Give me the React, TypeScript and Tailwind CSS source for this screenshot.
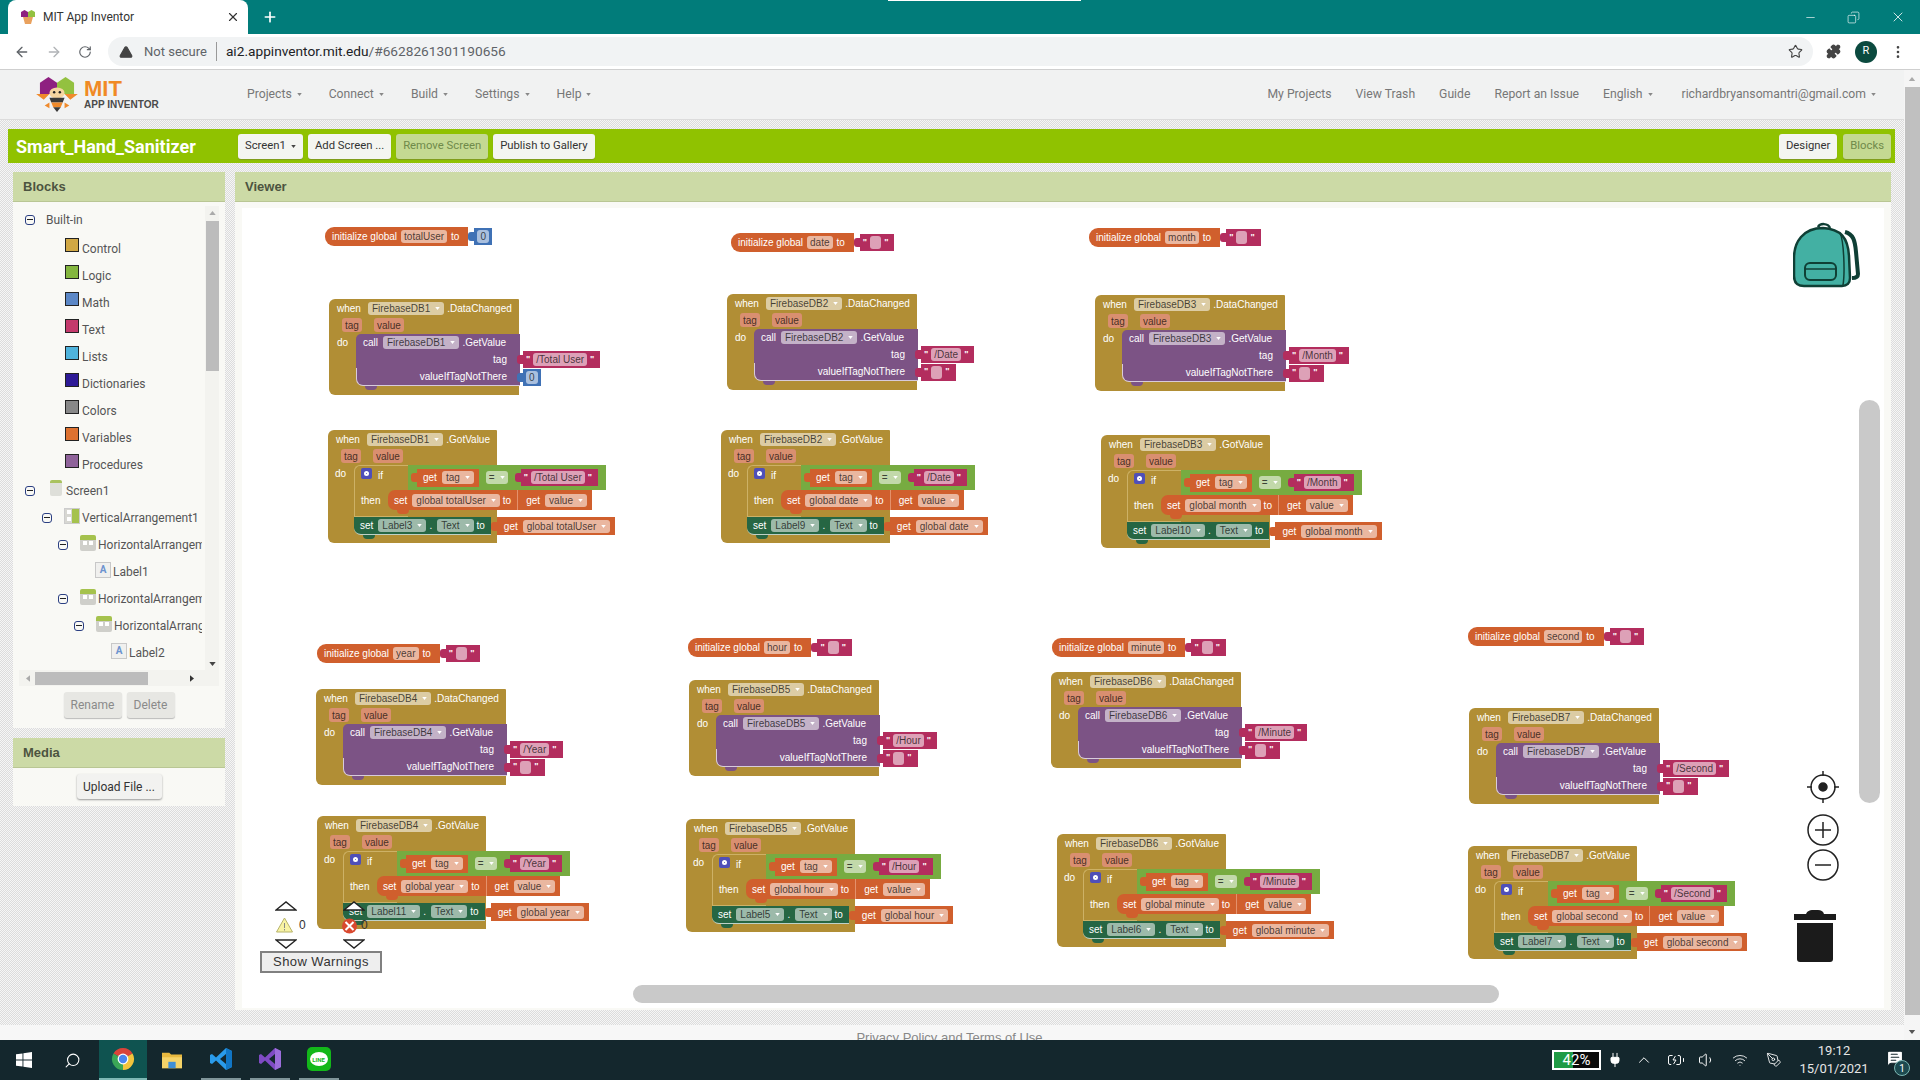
import React from "react"
import { ArrowLeft, ArrowRight, RotateCw, Star, Puzzle, EllipsisVertical, TriangleAlert, X, Plus, Minus, Copy, Search, ChevronUp, Plug, Volume1, Wifi, MessageSquareText, BatteryCharging, PenTool } from "lucide-react"

const dither = "bg-[repeating-conic-gradient(#dcdcdc_0_25%,#f6f6f6_0_50%)] bg-[length:2px_2px]"
const panelHead = "flex h-[30px] items-center border-b border-[#b9c694] bg-[#ccdaa6] pl-[10px] text-[13px] font-bold text-[#4c5440]"

function Caret({ className = "" }: { className?: string }) {
  return <svg viewBox="0 0 6 4" className={`ml-[5px] h-[3px] w-[5px] shrink-0 fill-current ${className}`}><path d="M0 0h6L3 4z" /></svg>
}

function Field({ children, drop }: { children?: React.ReactNode; drop?: boolean }) {
  return (
    <span className={`flex h-[13px] items-center rounded-[3px] bg-white/55 text-black/70 ${drop ? "ml-[5px] mr-[3px] px-[4px]" : "mx-[4px] px-[3px]"}`}>
      {children}
      {drop && <Caret className="text-white" />}
    </span>
  )
}

function Tab({ color }: { color: string }) {
  return <span className={`h-[9px] w-[6px] shrink-0 rounded-l-[3px] ${color}`} />
}

function TextValue({ text }: { text?: string }) {
  return (
    <div className="flex items-center">
      <Tab color="bg-[#b32d5e]" />
      <div className="flex h-[17px] items-center bg-[#b32d5e] pl-[3px] pr-[6px] text-white">
        <span className="text-[9px] font-bold">"</span>
        <span className="mx-[3px] flex h-[13px] min-w-[11px] items-center rounded-[3px] bg-white/55 px-[3px] text-black/70">{text}</span>
        <span className="text-[9px] font-bold">"</span>
      </div>
    </div>
  )
}

function ZeroValue() {
  return (
    <div className="flex items-center">
      <Tab color="bg-[#3f71b5]" />
      <div className="flex h-[17px] items-center bg-[#3f71b5] px-[2px]">
        <span className="mx-[1px] flex h-[13px] items-center rounded-[3px] bg-white/55 px-[3px] text-black/70">0</span>
      </div>
    </div>
  )
}

function InitBlock({ pos, name, zero }: { pos: string; name: string; zero?: boolean }) {
  return (
    <div className={`absolute flex items-center whitespace-nowrap ${pos}`}>
      <div className="flex h-[19px] items-center rounded-l-[9px] bg-[#d05f2d] pl-[7px] pr-[9px] text-white">
        initialize global<Field>{name}</Field>to
      </div>
      {zero ? <ZeroValue /> : <TextValue />}
    </div>
  )
}

function Bump({ color }: { color: string }) {
  return <span className={`absolute bottom-[-4px] left-[9px] h-[4px] w-[12px] rounded-b-[6px] ${color}`} />
}

function WhenRows({ db, method }: { db: string; method: string }) {
  return (
    <>
      <div className="flex h-[17px] items-center pl-[8px] pt-[1px] text-white">
        when<span className="w-[2px]" /><Field drop>{db}</Field>{method}
      </div>
      <div className="flex h-[18px] items-center pl-[13px]">
        <span className="flex h-[14px] items-center rounded-[3px] bg-[#d98f70] px-[3px] text-black/70">tag</span>
        <span className="ml-[12px] flex h-[14px] items-center rounded-[3px] bg-[#d98f70] px-[3px] text-black/70">value</span>
      </div>
    </>
  )
}

function DataChanged({ pos, db, path, zero }: { pos: string; db: string; path: string; zero?: boolean }) {
  return (
    <div className={`absolute w-[190px] whitespace-nowrap rounded-l-[6px] rounded-tr-[1px] bg-[#b18e35] ${pos}`}>
      <WhenRows db={db} method=".DataChanged" />
      <div className="flex">
        <span className="w-[27px] shrink-0 pl-[8px] pt-[1px] text-white">do</span>
        <div className="relative">
          <div className="flex h-[17px] w-[164px] items-center rounded-tl-[5px] bg-[#7c5385] pl-[7px] text-white">
            call<Field drop>{db}</Field>.GetValue
          </div>
          <div className="flex h-[17px] items-center">
            <div className="flex h-full w-[164px] items-center justify-end bg-[#7c5385] pr-[13px] text-white">tag</div>
            <div className="-ml-[3px]"><TextValue text={path} /></div>
          </div>
          <div className="flex h-[18px] items-center">
            <div className="flex h-full w-[164px] items-center justify-end rounded-bl-[7px] border-b border-l border-white/70 bg-[#7c5385] pr-[13px] text-white">valueIfTagNotThere</div>
            <div className="-ml-[3px]">{zero ? <ZeroValue /> : <TextValue />}</div>
          </div>
          <Bump color="bg-[#7c5385]" />
        </div>
      </div>
      <div className="h-[9px]" />
    </div>
  )
}

function GetBlock({ name, narrow }: { name: string; narrow?: boolean }) {
  return (
    <div className={`flex h-[18px] items-center bg-[#d05f2d] pr-[2px] text-white ${narrow ? "pl-[6px]" : "pl-[7px]"}`}>
      get<Field drop>{name}</Field>
    </div>
  )
}

function GotValue({ pos, db, label, global, path }: { pos: string; db: string; label: string; global: string; path: string }) {
  return (
    <div className={`absolute w-[169px] whitespace-nowrap rounded-l-[6px] rounded-tr-[1px] bg-[#b18e35] ${pos}`}>
      <WhenRows db={db} method=".GotValue" />
      <div className="flex">
        <span className="w-[26px] shrink-0 pl-[7px] pt-[1px] text-white">do</span>
        <div>
          {/* if / then */}
          <div className="flex h-[25px]">
            <div className="flex w-[54px] shrink-0 items-start rounded-tl-[6px] border-l border-t border-[#cdb166] pl-[6px] pt-[2px] text-white">
              <span className="mr-[6px] flex h-[11px] w-[11px] items-center justify-center rounded-[2px] bg-[#4f4fb8]">
                <span className="h-[5px] w-[5px] rounded-full border-2 border-white" />
              </span>
              if
            </div>
            <div className="flex h-[25px] items-center bg-[#77ab41] pl-[3px] pr-[8px]">
              <Tab color="bg-[#d05f2d]" />
              <GetBlock name="tag" narrow />
              <span className="mx-[7px] flex h-[13px] items-center rounded-[3px] bg-white/55 px-[3px] text-black/70">=<Caret className="text-white" /></span>
              <TextValue text={path} />
            </div>
          </div>
          <div className="flex h-[20px]">
            <div className="flex w-[34px] shrink-0 items-center border-l border-[#cdb166] pl-[6px] text-white">then</div>
            <div className="relative flex h-[20px] items-center rounded-l-[7px] bg-[#d05f2d] pl-[6px] text-white">
              set<Field drop>{global}</Field>to
              <span className="ml-[6px] mr-[1px] h-[20px] w-px bg-[#e4916c]" />
              <GetBlock name="value" />
              <Bump color="bg-[#d05f2d]" />
            </div>
          </div>
          <div className="h-[7px] w-[54px] border-b border-l border-[#cdb166]" />
          <div className="relative flex h-[18px] items-center">
            <div className="flex h-full items-center rounded-bl-[7px] border-b border-white/70 bg-[#266643] pl-[6px] pr-[6px] text-white">
              set<Field drop>{label}</Field>.<Field drop>Text</Field>to
            </div>
            <Tab color="bg-[#d05f2d]" />
            <GetBlock name={global} />
            <Bump color="bg-[#266643]" />
          </div>
        </div>
      </div>
      <div className="h-[8px]" />
    </div>
  )
}

const categories = [
  { name: "Control", color: "bg-[#d1a845]" },
  { name: "Logic", color: "bg-[#84b63f]" },
  { name: "Math", color: "bg-[#5b87c6]" },
  { name: "Text", color: "bg-[#c43a6c]" },
  { name: "Lists", color: "bg-[#4fb3dc]" },
  { name: "Dictionaries", color: "bg-[#2d1a96]" },
  { name: "Colors", color: "bg-[#888888]" },
  { name: "Variables", color: "bg-[#de7230]" },
  { name: "Procedures", color: "bg-[#8f639a]" },
]

function MinusBox({ className = "" }: { className?: string }) {
  return (
    <span className={`flex h-[10px] w-[10px] shrink-0 items-center justify-center rounded-[3px] border border-[#2b3f82] ${className}`}>
      <span className="h-px w-[6px] bg-[#222]" />
    </span>
  )
}

function ScreenIcon() {
  return <span className="-mt-[6px] block h-[16px] w-[12px] shrink-0 rounded-[2px] border-t-[3px] border-[#a9c25f] bg-[#dedfd9]" />
}

function VertIcon() {
  return (
    <span className="-mt-[4px] flex h-[16px] w-[16px] shrink-0 border border-[#ccc]">
      <span className="flex w-1/2 flex-col items-center justify-around bg-[#d7d7d2]">
        <span className="h-[4px] w-[4px] bg-white" />
        <span className="h-[4px] w-[4px] bg-white" />
      </span>
      <span className="w-1/2 bg-[#a5c24d]" />
    </span>
  )
}

function HorizIcon() {
  return (
    <span className="-mt-[4px] flex h-[16px] w-[16px] shrink-0 flex-col overflow-hidden rounded-[2px]">
      <span className="h-[5px] bg-[#a5c24d]" />
      <span className="flex h-[11px] justify-center gap-[2px] bg-[#cfcfca] pt-px">
        <span className="h-[4px] w-[4px] bg-white" />
        <span className="h-[4px] w-[4px] bg-white" />
      </span>
    </span>
  )
}

function LabelIcon() {
  return (
    <span className="-mt-[4px] flex h-[16px] w-[16px] shrink-0 items-center justify-center border border-[#c8c8c8] bg-[#f0f0ee] text-[10px] font-bold leading-none text-[#6c93cf]">A</span>
  )
}

function TreeRow({ pad, minus, icon, label }: { pad: string; minus?: boolean; icon?: React.ReactNode; label: string }) {
  return (
    <div className={`flex h-[27px] items-center whitespace-nowrap ${pad}`}>
      {minus && <MinusBox className="mr-[12px]" />}
      {icon && <span className="mr-[2px] flex w-[16px] justify-center">{icon}</span>}
      <span>{label}</span>
    </div>
  )
}

function BlocksPanel() {
  return (
    <div className="w-[212px] shrink-0">
      <div className="bg-[#f9f9f5] pb-[10px]">
        <div className={panelHead}>Blocks</div>
        <div className="relative mx-[6px] mt-[4px] h-[480px] overflow-hidden font-['Roboto',sans-serif] text-[12px] text-[#555]">
          <div className="w-[183px] overflow-hidden">
            <div className="flex h-[28px] items-center pb-[1px] pl-[6px]">
              <MinusBox className="mr-[11px]" />Built-in
            </div>
            {categories.map(c => (
              <div key={c.name} className="flex h-[27px] items-center pl-[46px]">
                <span className={`-mt-[6px] mr-[3px] h-[14px] w-[14px] border border-[#222] ${c.color}`} />
                <span className="mt-[2px]">{c.name}</span>
              </div>
            ))}
            <div className="flex h-[27px] items-center pl-[6px]">
              <MinusBox className="mr-[15px]" /><span className="mr-[4px] flex"><ScreenIcon /></span>Screen1
            </div>
            <TreeRow pad="pl-[23px]" minus icon={<VertIcon />} label="VerticalArrangement1" />
            <TreeRow pad="pl-[39px]" minus icon={<HorizIcon />} label="HorizontalArrangement1" />
            <TreeRow pad="pl-[76px]" icon={<LabelIcon />} label="Label1" />
            <TreeRow pad="pl-[39px]" minus icon={<HorizIcon />} label="HorizontalArrangement2" />
            <TreeRow pad="pl-[55px]" minus icon={<HorizIcon />} label="HorizontalArrangement3" />
            <TreeRow pad="pl-[92px]" icon={<LabelIcon />} label="Label2" />
          </div>
          {/* tree scrollbars */}
          <div className="absolute right-0 top-0 flex h-[464px] w-[14px] flex-col items-center bg-[#f3f3ef]">
            <svg viewBox="0 0 8 5" className="mt-[5px] h-[4px] w-[7px] fill-[#aaa]"><path d="M4 0l4 5H0z" /></svg>
            <div className="mt-[6px] h-[150px] w-[13px] bg-[#bcbcbc]" />
            <svg viewBox="0 0 8 5" className="mt-auto mb-[4px] h-[4px] w-[7px] fill-[#444]"><path d="M0 0h8L4 5z" /></svg>
          </div>
          <div className="absolute bottom-0 left-0 right-0 flex h-[16px] items-center bg-[#f3f3ef]">
            <svg viewBox="0 0 5 8" className="ml-[7px] h-[7px] w-[4px] fill-[#aaa]"><path d="M5 0v8L0 4z" /></svg>
            <div className="ml-[5px] h-[13px] w-[113px] bg-[#bcbcbc]" />
            <svg viewBox="0 0 5 8" className="ml-[42px] h-[7px] w-[4px] fill-[#333]"><path d="M0 0l5 4-5 4z" /></svg>
          </div>
        </div>
        <div className="mt-[6px] flex justify-center gap-[5px] font-['Roboto',sans-serif] text-[12px] text-[#8a8a8a]">
          <span className="flex h-[26px] w-[58px] items-center justify-center rounded-[3px] bg-[#e7e7e3] shadow-[0_1px_1px_#bbb]">Rename</span>
          <span className="flex h-[26px] w-[48px] items-center justify-center rounded-[3px] bg-[#e7e7e3] shadow-[0_1px_1px_#bbb]">Delete</span>
        </div>
      </div>
      <div className="mt-[10px] bg-[#f9f9f5] pb-[7px]">
        <div className={panelHead}>Media</div>
        <div className="mt-[6px] flex justify-center">
          <span className="flex h-[25px] w-[85px] items-center justify-center rounded-[3px] bg-[#f2f2f0] font-['Roboto',sans-serif] text-[12px] text-[#333] shadow-[0_1px_2px_#999]">Upload File ...</span>
        </div>
      </div>
    </div>
  )
}

function Backpack() {
  return (
    <svg viewBox="0 0 67 66" className="absolute left-[1551px] top-[14px] h-[66px] w-[67px]">
      <path d="M52 10c8 2 10 8 11 20l2 22c0 3-3 4-6 4" fill="#fff" stroke="#0f3f35" strokeWidth="4" />
      <path d="M25 5c2-4 10-4 12 1" fill="none" stroke="#0f3f35" strokeWidth="2.5" />
      <path d="M30 6C10 6 1 20 1 36v18c0 6 3 10 10 10h38c5 0 8-3 8-8l-1-22C55 16 48 7 30 6z" fill="#43b0a3" stroke="#0f3f35" strokeWidth="2.5" />
      <path d="M47 11c4 8 5 40 3 52" fill="none" stroke="#0f3f35" strokeWidth="1.5" />
      <rect x="12" y="41" width="31" height="17" rx="5" fill="#43b0a3" stroke="#0f3f35" strokeWidth="2" />
      <path d="M12 47h31" stroke="#0f3f35" strokeWidth="1.5" />
    </svg>
  )
}

function WorkspaceControls() {
  return (
    <>
      <svg viewBox="0 0 32 32" className="absolute left-[1565px] top-[563px] h-[32px] w-[32px]" fill="none" stroke="#222" strokeWidth="1.5">
        <circle cx="16" cy="16" r="12" />
        <circle cx="16" cy="16" r="4" fill="#222" />
        <path d="M16 0v5M16 27v5M0 16h5M27 16h5" />
      </svg>
      <svg viewBox="0 0 32 32" className="absolute left-[1565px] top-[606px] h-[32px] w-[32px]" fill="none" stroke="#222" strokeWidth="1.5">
        <circle cx="16" cy="16" r="15" />
        <path d="M16 8v16M8 16h16" />
      </svg>
      <svg viewBox="0 0 32 32" className="absolute left-[1565px] top-[641px] h-[32px] w-[32px]" fill="none" stroke="#222" strokeWidth="1.5">
        <circle cx="16" cy="16" r="15" />
        <path d="M8 16h16" />
      </svg>
      <svg viewBox="0 0 42 54" className="absolute left-[1552px] top-[700px] h-[54px] w-[42px]" fill="#1b1b1b">
        <path d="M12 6c1-3 4-4 6-4h6c3 0 5 1 6 4h12v6H0V6z" />
        <path d="M3 15h36v36c0 2-1 3-3 3H6c-2 0-3-1-3-3z" />
      </svg>
    </>
  )
}

function Chevron({ pos, down }: { pos: string; down?: boolean }) {
  return (
    <svg viewBox="0 0 22 10" className={`absolute h-[10px] w-[22px] ${pos}`} fill="#fff" stroke="#222" strokeWidth="1.4">
      <path d={down ? "M1 1h20L11 9z" : "M1 9h20L11 1z"} />
    </svg>
  )
}

function WarningIndicator() {
  return (
    <>
      <Chevron pos="left-[33px] top-[693px]" />
      <svg viewBox="0 0 17 16" className="absolute left-[34px] top-[709px] h-[16px] w-[17px]">
        <path d="M8.5 1L16.5 15H.5z" fill="#f8f3a4" stroke="#b6b36a" />
        <path d="M8.5 6v5M8.5 12v1.5" stroke="#888" />
      </svg>
      <span className="absolute left-[57px] top-[711px] font-['Liberation_Sans',sans-serif] text-[12px] leading-none text-[#333]">0</span>
      <Chevron pos="left-[33px] top-[731px]" down />
      <Chevron pos="left-[101px] top-[693px]" />
      <svg viewBox="0 0 17 16" className="absolute left-[99px] top-[710px] h-[16px] w-[17px]">
        <circle cx="8.5" cy="8" r="7.5" fill="#d9492f" />
        <path d="M4.5 4l8 8M12.5 4l-8 8" stroke="#fff" strokeWidth="2" />
      </svg>
      <span className="absolute left-[119px] top-[711px] font-['Liberation_Sans',sans-serif] text-[12px] leading-none text-[#333]">0</span>
      <Chevron pos="left-[101px] top-[731px]" down />
      <div className="absolute left-[18px] top-[743px] flex h-[22px] w-[122px] items-center justify-center border-2 border-[#808080] bg-[#eeeeee] font-['Liberation_Sans',sans-serif] text-[13px] tracking-[0.4px] text-[#333]">Show Warnings</div>
    </>
  )
}

function ChromeLogo() {
  return (
    <svg viewBox="0 0 24 24" className="h-[24px] w-[24px]">
      <path d="M12 12L2.47 6.5A11 11 0 0 1 21.53 6.5Z" fill="#d9443a" />
      <path d="M12 12L21.53 6.5A11 11 0 0 1 12 23Z" fill="#f2c43c" />
      <path d="M12 12L12 23A11 11 0 0 1 2.47 6.5Z" fill="#3aa757" />
      <circle cx="12" cy="12" r="5.4" fill="#fff" />
      <circle cx="12" cy="12" r="4.2" fill="#4b86ee" />
    </svg>
  )
}

function AppLogo() {
  return (
    <svg viewBox="0 0 44 38" className="h-[36px] w-[42px] shrink-0">
      <path d="M4 6l9-6 9 6v12H4z" fill="#8e2080" />
      <path d="M22 6l9-6 9 6v12H22z" fill="#93c140" />
      <path d="M0 18h14l-6 6zM44 18H30l6 6z" fill="#ef8a2c" />
      <path d="M9 30l5-3v6zM35 30l-5-3v6z" fill="#ef8a2c" />
      <ellipse cx="22" cy="17" rx="8" ry="6" fill="#f6d5a0" />
      <circle cx="19" cy="16" r="1.3" fill="#222" />
      <circle cx="25" cy="16" r="1.3" fill="#222" />
      <path d="M14 22h16l-2 5H16z" fill="#3a3a3a" />
      <path d="M16 27h12l-2 5H18z" fill="#ef8a2c" />
      <path d="M18 32h8l-4 5z" fill="#3a3a3a" />
    </svg>
  )
}

function HeaderMenu({ label }: { label: string }) {
  return (
    <span className="flex items-center whitespace-nowrap">
      {label}<Caret className="text-[#888]" />
    </span>
  )
}

function BarButton({ label, off, drop }: { label: string; off?: boolean; drop?: boolean }) {
  return (
    <span className={`flex h-[25px] items-center whitespace-nowrap rounded-[3px] px-[7px] font-['Roboto',sans-serif] text-[11.3px] shadow-[0_1px_1px_#7f9a20] ${off ? "bg-[#c4d992] text-[#6f8a4a]" : "bg-[#f4f5f1] text-[#333]"}`}>
      {label}{drop && <Caret className="text-[#444]" />}
    </span>
  )
}

function TaskCell({ underline, children }: { underline?: boolean; children: React.ReactNode }) {
  return (
    <div className="flex h-[40px] w-[49px] justify-center">
      <div className={`flex h-[40px] w-[40px] items-center justify-center ${underline ? "border-b-2 border-[#7f9599]" : ""}`}>{children}</div>
    </div>
  )
}

export default function App() {
  return (
    <div className="relative flex h-[1080px] w-[1920px] flex-col overflow-hidden bg-white font-['Liberation_Sans',sans-serif] text-[10px]">
      {/* browser tab strip */}
      <div className="relative flex h-[34px] shrink-0 bg-[#017c7a] font-['Roboto',sans-serif] text-white">
        <div className="ml-[8px] flex h-[34px] w-[240px] items-center rounded-t-[8px] bg-white pl-[12px] pr-[8px] text-[12px] text-[#333]">
          <svg viewBox="0 0 16 16" className="mr-[7px] h-[16px] w-[16px] shrink-0">
            <path d="M1 3l3.5-2L8 3v5H1z" fill="#8e2080" />
            <path d="M8 3l3.5-2L15 3v5H8z" fill="#93c140" />
            <path d="M3 8h10l-2 7H5z" fill="#e9a15e" />
          </svg>
          <span>MIT App Inventor</span>
          <X className="ml-auto h-[14px] w-[14px] text-[#333]" strokeWidth={2} />
        </div>
        <Plus className="ml-[14px] mt-[9px] h-[16px] w-[16px]" strokeWidth={2.5} />
        <div className="absolute left-[888px] top-0 h-px w-[193px] bg-white" />
        <div className="ml-auto flex items-center gap-[30px] pr-[14px]">
          <Minus className="h-[13px] w-[13px]" strokeWidth={1.2} />
          <Copy className="h-[13px] w-[13px] -scale-x-100" strokeWidth={1.2} />
          <X className="h-[16px] w-[16px]" strokeWidth={1.2} />
        </div>
      </div>

      {/* address bar */}
      <div className="flex h-[36px] shrink-0 items-center border-b border-[#cfcfcf] pl-[14px] font-['Roboto',sans-serif] text-[13px] text-[#5f6368]">
        <ArrowLeft className="h-[16px] w-[16px]" strokeWidth={2} />
        <ArrowRight className="ml-[16px] h-[16px] w-[16px] text-[#b0b3b6]" strokeWidth={2} />
        <RotateCw className="ml-[16px] h-[14px] w-[14px]" strokeWidth={2} />
        <div className="ml-[16px] flex h-[29px] w-[1705px] items-center rounded-full bg-[#f1f3f4] pl-[11px] pr-[10px]">
          <TriangleAlert className="h-[14px] w-[14px] fill-[#444] text-[#444]" />
          <span className="ml-[11px]">Not secure</span>
          <span className="mx-[9px] h-[19px] w-px bg-[#999]" />
          <span className="text-[13.7px] text-[#202124]">ai2.appinventor.mit.edu<span className="text-[#5f6368]">/#6628261301190656</span></span>
          <Star className="ml-auto h-[15px] w-[15px] text-[#444]" strokeWidth={1.8} />
        </div>
        <Puzzle className="ml-[13px] h-[15px] w-[15px] fill-[#444] text-[#444]" />
        <span className="ml-[14px] flex h-[22px] w-[22px] items-center justify-center rounded-full bg-[#0b4a3f] text-[11px] text-white">R</span>
        <EllipsisVertical className="ml-[13px] h-[16px] w-[16px] text-[#444]" />
      </div>

      {/* page */}
      <div className="relative flex min-h-0 flex-1">
        <div className="flex w-[1904px] shrink-0 flex-col overflow-hidden">
          <div className={`flex flex-1 flex-col overflow-hidden ${dither}`}>
            <div className="flex h-[50px] shrink-0 items-center border-b border-[#dcdcdc] bg-[#f1f2f2] pl-[36px] pr-[28px] font-['Roboto',sans-serif] text-[12.2px] text-[#777]">
              <AppLogo />
              <div className="-ml-[2px] mr-[90px] flex w-[76px] flex-col font-['Liberation_Sans',sans-serif]">
                <span className="pl-[8px] text-[22px] font-bold leading-[20px] text-[#f08a25]">MIT</span>
                <span className="pl-[8px] text-[10px] font-bold leading-[11px] whitespace-nowrap text-[#4a4a4a]">APP INVENTOR</span>
              </div>
              <div className="ml-[5px] flex gap-[27px]">
                <HeaderMenu label="Projects" />
                <HeaderMenu label="Connect" />
                <HeaderMenu label="Build" />
                <HeaderMenu label="Settings" />
                <HeaderMenu label="Help" />
              </div>
              <div className="ml-auto flex gap-[24px]">
                <span>My Projects</span>
                <span>View Trash</span>
                <span>Guide</span>
                <span>Report an Issue</span>
                <span className="mr-[5px]"><HeaderMenu label="English" /></span>
                <HeaderMenu label="richardbryansomantri@gmail.com" />
              </div>
            </div>

            <div className="ml-[8px] mt-[9px] flex h-[34px] w-[1887px] shrink-0 items-center bg-[#90c200] pl-[8px] pr-[4px]">
              <span className="w-[222px] font-['Roboto',sans-serif] text-[18px] font-bold text-white">Smart_Hand_Sanitizer</span>
              <div className="flex gap-[5px]">
                <BarButton label="Screen1" drop />
                <BarButton label="Add Screen ..." />
                <BarButton label="Remove Screen" off />
                <BarButton label="Publish to Gallery" />
              </div>
              <div className="ml-auto flex gap-[6px]">
                <BarButton label="Designer" />
                <BarButton label="Blocks" off />
              </div>
            </div>

            <div className="ml-[13px] mt-[9px] flex shrink-0 gap-[10px]">
              <BlocksPanel />
              <div className="w-[1656px] shrink-0 bg-[#f9f9f5] pb-[2px]">
                <div className={panelHead}>Viewer</div>
                <div className="relative mx-[7px] mt-[6px] h-[800px] overflow-hidden bg-white">
                  <InitBlock pos="left-[83px] top-[19px]" name="totalUser" zero />
                  <DataChanged pos="left-[87px] top-[91px]" db="FirebaseDB1" path="/Total User" zero />
                  <GotValue pos="left-[86px] top-[222px]" db="FirebaseDB1" label="Label3" global="global totalUser" path="/Total User" />

                  <InitBlock pos="left-[489px] top-[25px]" name="date" />
                  <DataChanged pos="left-[485px] top-[86px]" db="FirebaseDB2" path="/Date" />
                  <GotValue pos="left-[479px] top-[222px]" db="FirebaseDB2" label="Label9" global="global date" path="/Date" />

                  <InitBlock pos="left-[847px] top-[20px]" name="month" />
                  <DataChanged pos="left-[853px] top-[87px]" db="FirebaseDB3" path="/Month" />
                  <GotValue pos="left-[859px] top-[227px]" db="FirebaseDB3" label="Label10" global="global month" path="/Month" />

                  <InitBlock pos="left-[75px] top-[436px]" name="year" />
                  <DataChanged pos="left-[74px] top-[481px]" db="FirebaseDB4" path="/Year" />
                  <GotValue pos="left-[75px] top-[608px]" db="FirebaseDB4" label="Label11" global="global year" path="/Year" />

                  <InitBlock pos="left-[446px] top-[430px]" name="hour" />
                  <DataChanged pos="left-[447px] top-[472px]" db="FirebaseDB5" path="/Hour" />
                  <GotValue pos="left-[444px] top-[611px]" db="FirebaseDB5" label="Label5" global="global hour" path="/Hour" />

                  <InitBlock pos="left-[810px] top-[430px]" name="minute" />
                  <DataChanged pos="left-[809px] top-[464px]" db="FirebaseDB6" path="/Minute" />
                  <GotValue pos="left-[815px] top-[626px]" db="FirebaseDB6" label="Label6" global="global minute" path="/Minute" />

                  <InitBlock pos="left-[1226px] top-[419px]" name="second" />
                  <DataChanged pos="left-[1227px] top-[500px]" db="FirebaseDB7" path="/Second" />
                  <GotValue pos="left-[1226px] top-[638px]" db="FirebaseDB7" label="Label7" global="global second" path="/Second" />

                  <Backpack />
                  <WorkspaceControls />
                  <WarningIndicator />
                  <div className="absolute left-[391px] top-[777px] h-[18px] w-[866px] rounded-full bg-[#c9c9c9]" />
                  <div className="absolute left-[1617px] top-[192px] h-[403px] w-[21px] rounded-full bg-[#c9c9c9]" />
                </div>
              </div>
            </div>
            <div className="flex-1" />
          </div>
          <div className="relative flex h-[15px] shrink-0 justify-center overflow-hidden bg-[#f7f7f7] text-[13px] text-[#888]">
            <span className="mt-[3px] pr-[5px]">Privacy Policy and Terms of Use</span>
          </div>
        </div>
        {/* page scrollbar */}
        <div className="flex w-[16px] flex-col items-center bg-[#f5f5f5]">
          <svg viewBox="0 0 8 5" className="mt-[7px] h-[4px] w-[8px] fill-[#aaa]"><path d="M4 0l4 5H0z" /></svg>
          <div className="mt-[6px] h-[928px] w-[15px] bg-[#c0c0c0]" />
          <svg viewBox="0 0 8 5" className="mt-auto mb-[6px] h-[4px] w-[8px] fill-[#555]"><path d="M0 0h8L4 5z" /></svg>
        </div>
      </div>

      {/* taskbar */}
      <div className="flex h-[40px] shrink-0 items-center bg-[#14272d] font-['Roboto',sans-serif] text-white">
        <svg viewBox="0 0 16 16" className="ml-[16px] h-[16px] w-[16px] fill-white">
          <path d="M0 2.3L6.5 1.4V7.6H0zM7.4 1.3L16 0V7.6H7.4zM0 8.4H6.5V14.6L0 13.7zM7.4 8.4H16V16L7.4 14.7z" />
        </svg>
        <Search className="ml-[32px] h-[17px] w-[17px] -scale-x-100" strokeWidth={1.5} />
        <div className="ml-[18px] flex h-[40px] w-[48px] items-center justify-center border-b-2 border-[#7db8b4] bg-[#0f5350]">
          <ChromeLogo />
        </div>
        <TaskCell>
          <svg viewBox="0 0 24 22" className="h-[20px] w-[22px]">
            <path d="M1 3h8l2 2h12v15H1z" fill="#e8b93f" />
            <path d="M1 8h22v12H1z" fill="#f5d368" />
            <rect x="8" y="13" width="8" height="7" fill="#3f8fd6" />
          </svg>
        </TaskCell>
        <TaskCell underline>
          <svg viewBox="0 0 24 24" className="h-[24px] w-[24px]">
            <path d="M17 1l6 3v16l-6 3L7 13.5 3 17l-2-1V8l2-1 4 3.5z" fill="#2a9bea" />
            <path d="M17 7l-6 5 6 5z" fill="#14272d" />
            <path d="M17 1l6 3v16l-6 3z" fill="#1176c5" />
          </svg>
        </TaskCell>
        <TaskCell underline>
          <svg viewBox="0 0 24 24" className="h-[24px] w-[24px]">
            <path d="M17 1l6 3v16l-6 3L7 13.5 3 17l-2-1V8l2-1 4 3.5z" fill="#7f4bc4" />
            <path d="M17 7l-6 5 6 5z" fill="#14272d" />
            <path d="M17 1l6 3v16l-6 3z" fill="#9c6edb" />
          </svg>
        </TaskCell>
        <TaskCell underline>
          <div className="flex h-[24px] w-[24px] items-center justify-center rounded-[5px] bg-[#13b71a] px-[3px]">
            <span className="flex h-[14px] w-[18px] items-center justify-center rounded-[50%] bg-white text-[6px] font-bold text-[#13b71a]">LINE</span>
          </div>
        </TaskCell>

        <div className="ml-auto flex items-center">
          <div className="relative flex h-[20px] w-[49px] items-center justify-center border-2 border-white bg-[#0a0a0a] text-[15px]">
            <span className="absolute bottom-0 left-0 top-0 w-[42%] bg-[#1f9a45]" />
            <span className="relative">42%</span>
          </div>
          <Plug className="ml-[6px] h-[16px] w-[16px] fill-white" strokeWidth={1.5} />
          <ChevronUp className="ml-[12px] h-[18px] w-[18px]" strokeWidth={1.3} />
          <BatteryCharging className="ml-[14px] h-[18px] w-[18px]" strokeWidth={1.3} />
          <Volume1 className="ml-[13px] h-[18px] w-[18px]" strokeWidth={1.3} />
          <Wifi className="ml-[16px] h-[16px] w-[16px]" strokeWidth={1.3} />
          <PenTool className="ml-[18px] h-[16px] w-[16px]" strokeWidth={1.3} />
          <div className="ml-[19px] flex w-[66px] flex-col items-center text-[13px] leading-[18px] text-[#e6e6e6]">
            <span>19:12</span>
            <span>15/01/2021</span>
          </div>
          <div className="relative ml-[19px] mr-[16px] h-[22px] w-[18px]">
            <MessageSquareText className="h-[18px] w-[18px] fill-white text-[#14272d]" strokeWidth={1.5} />
            <span className="absolute -bottom-[5px] left-[8px] flex h-[16px] w-[16px] items-center justify-center rounded-full border border-[#7db8b4] bg-[#1c4a50] text-[10px]">1</span>
          </div>
        </div>
      </div>
    </div>
  )
}
